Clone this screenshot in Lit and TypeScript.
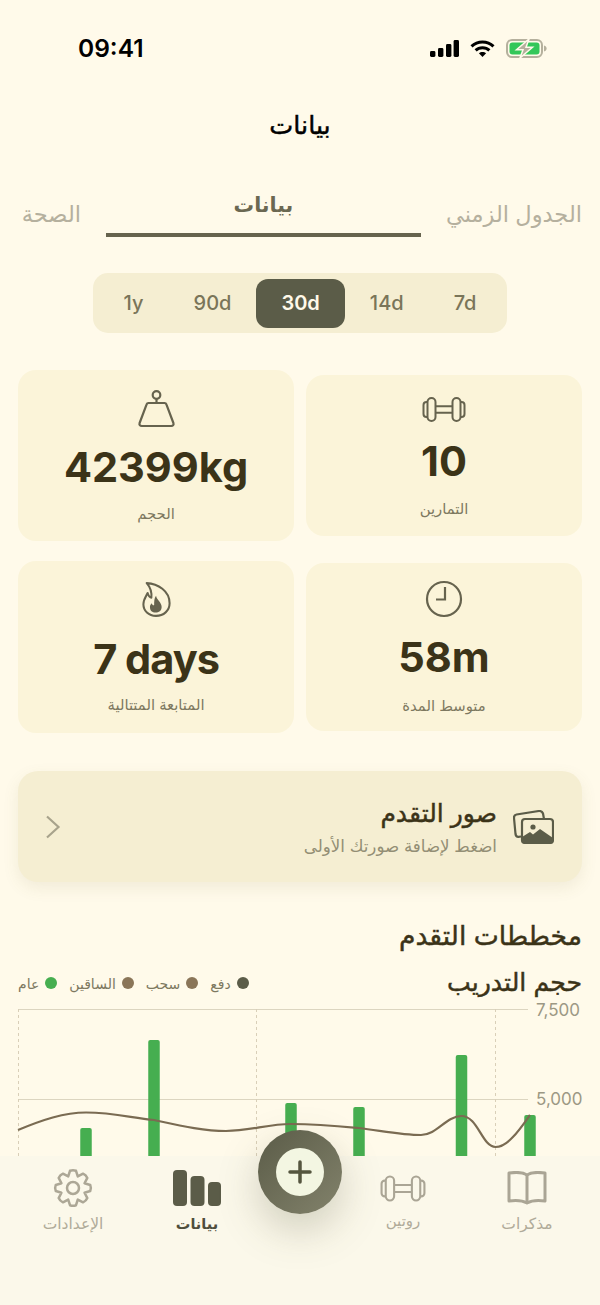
import { LitElement, css, html, svg } from 'lit';
import { customElement } from 'lit/decorators.js';

const BARS = [
  { x: 86, top: 1128 },
  { x: 154, top: 1040 },
  { x: 291, top: 1103 },
  { x: 359, top: 1107 },
  { x: 461.5, top: 1055 },
  { x: 530, top: 1115 },
];

const LEGEND = [
  { label: 'دفع', color: '#5b5c48' },
  { label: 'سحب', color: '#8a7558' },
  { label: 'الساقين', color: '#8a7558' },
  { label: 'عام', color: '#46ae50' },
];

const PERIODS = ['7d', '14d', '30d', '90d', '1y'];

// scalloped gear outline, same look as the settings tab icon
function gearPath(cx: number, cy: number, teeth: number, outer: number, inner: number) {
  const step = (Math.PI * 2) / teeth;
  let d = '';
  for (let i = 0; i < teeth; i++) {
    const a = i * step - Math.PI / 2;
    const pts = [
      [a - step * 0.5, inner],
      [a - step * 0.22, outer],
      [a + step * 0.22, outer],
    ].map(([t, r]) => `${(cx + Math.cos(t) * r).toFixed(2)} ${(cy + Math.sin(t) * r).toFixed(2)}`);
    d += `${i === 0 ? 'M' : 'L'}${pts[0]} L${pts[1]} Q${(cx + Math.cos(a) * (outer + 1)).toFixed(2)} ${(cy + Math.sin(a) * (outer + 1)).toFixed(2)} ${pts[2]} `;
  }
  return d + 'Z';
}

const dumbbell = svg`
  <rect x="5.5" y="1" width="8" height="23" rx="4" />
  <rect x="30.5" y="1" width="8" height="23" rx="4" />
  <path d="M5.5 5H4.5a3 3 0 0 0-3 3v9a3 3 0 0 0 3 3h1" />
  <path d="M38.5 5h1a3 3 0 0 1 3 3v9a3 3 0 0 1-3 3h-1" />
  <path d="M13.5 9.2H30.5M13.5 15.8H30.5" />
`;

@customElement('app-root')
export class AppRoot extends LitElement {
  static styles = css`
    :host {
      display: block;
      position: relative;
      width: 600px;
      height: 1305px;
      overflow: hidden;
      background: #fffaea;
      color: #3b3318;
      font-family: Inter, 'DejaVu Sans', sans-serif;
    }

    svg {
      display: block;
    }

    .status {
      display: flex;
      justify-content: space-between;
      align-items: center;
      height: 20px;
      padding: 38px 53px 0 78px;
    }

    .time {
      font-size: 24.5px;
      font-weight: 600;
      color: #000;
      line-height: 20px;
    }

    .status-icons {
      display: flex;
      align-items: center;
      gap: 11px;
    }

    /* the Arabic face only has regular and bold, a thin stroke gives the semibold look */
    .title,
    .photos-title,
    .heading,
    .chart-title {
      font-weight: 400;
      -webkit-text-stroke: 0.45px currentColor;
    }

    .title {
      margin-top: 49px;
      text-align: center;
      font-size: 25.5px;
      line-height: 36px;
      color: #000;
    }

    .tabs {
      display: flex;
      align-items: flex-end;
      gap: 25px;
      margin-top: 47px;
      padding: 0 18px;
    }

    .tab {
      min-width: 63px;
      padding-bottom: 8px;
      font-size: 22.5px;
      line-height: 30px;
      color: #b5b09e;
      white-space: nowrap;
    }

    .tab.active {
      flex: 1;
      padding-bottom: 13px;
      border-bottom: 4px solid #66634e;
      text-align: center;
      font-size: 20.5px;
      font-weight: 700;
      color: #6b6852;
    }

    .periods {
      display: flex;
      width: max-content;
      margin: 36px auto 0;
      padding: 5.5px 6px;
      border-radius: 15px;
      background: #f5eed2;
    }

    .period {
      padding: 0 25px;
      border-radius: 12px;
      font-size: 20px;
      font-weight: 500;
      line-height: 49px;
      color: #7a7559;
    }

    .period.active {
      background: #5b5c48;
      color: #fff9e9;
      font-weight: 600;
    }

    .stats {
      display: grid;
      grid-template-columns: 276px 276px;
      grid-template-rows: 171px 172px;
      align-items: center;
      column-gap: 12px;
      row-gap: 20px;
      margin-top: 37px;
      padding: 0 18px;
    }

    .stat {
      display: flex;
      flex-direction: column;
      align-items: center;
      border-radius: 18px;
      background: #fbf4d9;
      box-sizing: border-box;
    }

    .stat.reps {
      height: 161px;
      padding-top: 14px;
      --value-gap: 4px;
      --label-gap: 9px;
    }

    .stat.volume {
      height: 171px;
      padding-top: 20px;
      --value-gap: 9px;
      --label-gap: 8px;
    }

    .stat.duration {
      height: 168px;
      padding-top: 16px;
      --value-gap: 10px;
      --label-gap: 10px;
    }

    .stat.streak {
      height: 172px;
      padding-top: 18px;
      --value-gap: 12px;
      --label-gap: 7px;
    }

    .icon-box {
      display: flex;
      align-items: center;
      justify-content: center;
      height: 40px;
    }

    .value {
      margin-top: var(--value-gap);
      font-size: 41.5px;
      font-weight: 700;
      line-height: 56px;
      color: #3b3318;
      direction: ltr;
    }

    .streak .value {
      letter-spacing: -1px;
    }

    .label {
      margin-top: var(--label-gap);
      font-size: 14.8px;
      line-height: 22px;
      color: #7d7860;
    }

    .photos {
      display: flex;
      align-items: center;
      gap: 16px;
      height: 111px;
      margin: 38px 18px 0;
      padding: 0 28px 0 27px;
      border-radius: 20px;
      background: #f5eed2;
      box-shadow: 0 6px 16px rgb(120 105 60 / 0.1);
    }

    .photos-text {
      flex: 1;
    }

    .photos-title {
      font-size: 25px;
      line-height: 34px;
      color: #3b3318;
    }

    .photos-sub {
      margin-top: 4px;
      font-size: 16.7px;
      line-height: 24px;
      color: #938e75;
    }

    .heading {
      margin: 33px 18px 0;
      font-size: 26.6px;
      line-height: 40px;
    }

    .chart-head {
      display: flex;
      align-items: center;
      justify-content: space-between;
      margin: 9px 18px 0;
      height: 36px;
    }

    .chart-title {
      font-size: 25.2px;
    }

    .legend {
      display: flex;
      gap: 12px;
      padding-top: 2px;
    }

    .legend-item {
      display: flex;
      align-items: center;
      gap: 6px;
      font-size: 14px;
      color: #7d7860;
    }

    .dot {
      width: 12px;
      height: 12px;
      border-radius: 50%;
    }

    .chart {
      margin-top: 9px;
      overflow: visible;
      direction: ltr;
    }

    .chart text {
      font-size: 17px;
      fill: #9c9884;
    }

    /* tab bar sits over the chart */
    .nav {
      position: absolute;
      left: 0;
      right: 0;
      bottom: 0;
      height: 149px;
      box-sizing: border-box;
      display: grid;
      grid-template-columns: 124px 124px 1fr 124px 124px;
      padding: 12px 11px 0;
      background: #fbf8ea;
    }

    .nav-item {
      display: flex;
      flex-direction: column;
      align-items: center;
      font-size: 15.5px;
      line-height: 24px;
      color: #b0ab99;
    }

    .nav-item.active {
      font-size: 14.5px;
      font-weight: 700;
      color: #4f4e3c;
    }

    .nav-item .label-text {
      margin-top: 4px;
    }

    .nav-item.routine .label-text {
      margin-top: 1px;
      font-size: 15px;
    }

    .fab {
      position: absolute;
      left: 258px;
      top: -26px;
      display: flex;
      align-items: center;
      justify-content: center;
      width: 84px;
      height: 84px;
      border-radius: 50%;
      background: linear-gradient(135deg, #5b5c48, #82826b);
      box-shadow: 0 16px 40px rgb(90 90 60 / 0.26);
    }

    .fab-inner {
      display: flex;
      align-items: center;
      justify-content: center;
      width: 48px;
      height: 48px;
      border-radius: 50%;
      background: #f3f6e2;
    }
  `;

  render() {
    return html`
      <div dir="rtl">
        <div class="status" dir="ltr">
          <span class="time">09:41</span>
          <div class="status-icons">
            <svg width="29" height="17" viewBox="0 0 29 17" fill="#000">
              <rect x="0" y="11" width="5.4" height="6" rx="1.4" />
              <rect x="8" y="8" width="5.4" height="9" rx="1.4" />
              <rect x="16" y="4" width="5.4" height="13" rx="1.4" />
              <rect x="23.6" y="0" width="5.4" height="17" rx="1.4" />
            </svg>
            <svg width="25" height="17" viewBox="0 0 25 17" fill="none" stroke="#000" stroke-width="3">
              <path d="M1.5 6.4C7.6.6 17.4.6 23.5 6.4" />
              <path d="M5.6 10.4c3.8-3.6 10-3.6 13.8 0" />
              <path d="M12.5 17 8.9 13.3c2-1.9 5.2-1.9 7.2 0Z" fill="#000" stroke="none" />
            </svg>
            <svg width="41" height="19" viewBox="0 0 41 19">
              <rect x="1" y="1" width="35" height="17" rx="5" fill="none" stroke="#b5b09d" stroke-width="2" />
              <rect x="3.5" y="3.5" width="30" height="12" rx="3" fill="#34c759" />
              <path d="M38 6.5c1.6.4 2.6 1.5 2.6 3s-1 2.6-2.6 3Z" fill="#b5b09d" />
              <path d="M23 0 10.500 10.800h6.500L14 19 26.500 8.200H20Z" fill="#b5b09d" stroke="#fffaea" stroke-width="1.500" />
            </svg>
          </div>
        </div>

        <div class="title">بيانات</div>

        <div class="tabs">
          <div class="tab">الجدول الزمني</div>
          <div class="tab active">بيانات</div>
          <div class="tab">الصحة</div>
        </div>

        <div class="periods">
          ${PERIODS.map((p) => html`<div class="period ${p === '30d' ? 'active' : ''}">${p}</div>`)}
        </div>

        <div class="stats">
          <div class="stat reps">
            <div class="icon-box">
              <svg width="44" height="25" viewBox="0 0 44 25" fill="none" stroke="#66634e" stroke-width="2">${dumbbell}</svg>
            </div>
            <div class="value">10</div>
            <div class="label">التمارين</div>
          </div>
          <div class="stat volume">
            <div class="icon-box">
              <svg width="40" height="40" viewBox="0 0 40 40" fill="none" stroke="#66634e" stroke-width="2.2" stroke-linejoin="round">
                <circle cx="20.5" cy="5" r="3.8" />
                <path d="M20.5 9v4" />
                <path d="M12.5 13H28.5a2 2 0 0 1 1.9 1.4L37.4 33c.6 1.8-.4 3-2.2 3H5.8c-1.8 0-2.8-1.2-2.2-3l7-18.6A2 2 0 0 1 12.500 13Z" />
              </svg>
            </div>
            <div class="value">42399kg</div>
            <div class="label">الحجم</div>
          </div>
          <div class="stat duration">
            <div class="icon-box">
              <svg width="38" height="38" viewBox="0 0 38 38" fill="none" stroke="#66634e" stroke-width="2.2">
                <circle cx="19" cy="19" r="17" />
                <path d="M20 7V19.500H11" />
              </svg>
            </div>
            <div class="value">58m</div>
            <div class="label">متوسط المدة</div>
          </div>
          <div class="stat streak">
            <div class="icon-box">
              <svg width="29" height="37" viewBox="0 0 31 38" fill="none" stroke="#66634e" stroke-width="2.2" stroke-linejoin="round">
                <path d="M5 1.500C17 2 29.500 10 29.500 23 29.500 31 23 36.500 15 36.500 7 36.500 1.500 31 1.500 24 1.500 19 4 16 6 12 7 15 8 17 10 17 10.500 12 9 6 5 1.500Z" />
                <path d="M15 15C16 20 21 22 21 27 21 31 18 33 14.500 33 11 33 8.500 31 8.500 27 8.500 25 9.500 24 10.500 23 11 25 12 25.500 13 25 13 21 13 18 15 15Z" fill="#66634e" stroke="none" />
              </svg>
            </div>
            <div class="value">7 days</div>
            <div class="label">المتابعة المتتالية</div>
          </div>
        </div>

        <div class="photos">
          <svg width="41" height="34" viewBox="0 0 41 34" fill="none" stroke="#5b5c48" stroke-width="2.2" stroke-linejoin="round">
            <path d="M8 26.500 5.500 26.800Q3 27 2.500 24L1 8Q.8 5 3.500 4.500L26 1Q29 .8 30 3.500L31 9" />
            <rect x="9" y="9" width="31" height="24" rx="3" />
            <circle cx="20" cy="17" r="2.600" fill="#5b5c48" stroke="none" />
            <path d="M9 30V27L17 22 20 24.500 27 19 40 28V30A3 3 0 0 1 37 33H12A3 3 0 0 1 9 30Z" fill="#5b5c48" stroke="none" />
          </svg>
          <div class="photos-text">
            <div class="photos-title">صور التقدم</div>
            <div class="photos-sub">اضغط لإضافة صورتك الأولى</div>
          </div>
          <svg width="16" height="24" viewBox="0 0 16 24" fill="none" stroke="#a8a38c" stroke-width="2.2">
            <path d="M2 1.500 13.500 12 2 22.500" />
          </svg>
        </div>

        <div class="heading">مخططات التقدم</div>

        <div class="chart-head">
          <div class="chart-title">حجم التدريب</div>
          <div class="legend">
            ${LEGEND.map(
              (l) => html`<div class="legend-item">
                <span class="dot" style="background:${l.color}"></span>${l.label}
              </div>`,
            )}
          </div>
        </div>

        ${this.renderChart()}
      </div>

      <div class="nav" dir="rtl">
        <div class="nav-item">
          <div class="icon-box">
            <svg width="40" height="34" viewBox="0 0 40 34" fill="none" stroke="#aaa595" stroke-width="3" stroke-linejoin="round">
              <path d="M20 4C15.500 1 9 1 2 2V30C9 29 15.500 29.500 20 32 24.500 29.500 31 29 38 30V2C31 1 24.500 1 20 4Z" />
              <path d="M20 4V32" />
            </svg>
          </div>
          <div class="label-text">مذكرات</div>
        </div>
        <div class="nav-item routine">
          <div class="icon-box">
            <svg width="46" height="27" viewBox="0 0 44 25" fill="none" stroke="#aaa595" stroke-width="2">${dumbbell}</svg>
          </div>
          <div class="label-text">روتين</div>
        </div>
        <div></div>
        <div class="nav-item active">
          <div class="icon-box">
            <svg width="48" height="36" viewBox="0 0 48 36" fill="#5b5c48">
              <rect x="0" y="0" width="14" height="36" rx="4" />
              <rect x="17.500" y="6" width="14" height="30" rx="4" />
              <rect x="35" y="12" width="13" height="24" rx="4" />
            </svg>
          </div>
          <div class="label-text">بيانات</div>
        </div>
        <div class="nav-item">
          <div class="icon-box">
            <svg width="40" height="40" viewBox="0 0 40 40" fill="none" stroke="#aca796" stroke-width="2.500" stroke-linejoin="round">
              <path d=${gearPath(20, 20, 8, 17.5, 12.5)} />
              <circle cx="20" cy="20" r="6" />
            </svg>
          </div>
          <div class="label-text">الإعدادات</div>
        </div>
        <div class="fab">
          <div class="fab-inner">
            <svg width="24" height="24" viewBox="0 0 24 24" fill="none" stroke="#55563f" stroke-width="3.500" stroke-linecap="round">
              <path d="M12 2V22M2 12H22" />
            </svg>
          </div>
        </div>
      </div>
    `;
  }

  private renderChart() {
    // coordinates are page px minus the chart origin (18, 1009)
    const ox = 18;
    const oy = 1009;
    return html`
      <svg class="chart" width="582" height="200" viewBox="0 0 582 200">
        <path d="M0 .5H510M0 90.500H510" stroke="#dcd5c0" fill="none" />
        <path d="M.5 0V200M238.500 0V200M477.500 0V200" stroke="#d9cfb8" stroke-dasharray="3 3" fill="none" />
        ${BARS.map(
          (b) => svg`<rect x=${b.x - ox - 5.75} y=${b.top - oy} width="11.500" height="200" rx="2" fill="#46ae50" />`,
        )}
        <path
          d="M0 121C24 111 46 103.500 68 103.500 96 103.500 114 109 136 111 164 117 186 122 208 122 232 122 250 115 273 115 300 115 320 117 341 119 365 122 385 126 403 126 419 126 428 107 443.500 107 460 107 464 138 477.500 138 490 138 502 120 512 106"
          fill="none"
          stroke="#7a6b52"
          stroke-width="2.200"
        />
        <text x="518" y="6.500">7,500</text>
        <text x="518" y="96">5,000</text>
      </svg>
    `;
  }
}
